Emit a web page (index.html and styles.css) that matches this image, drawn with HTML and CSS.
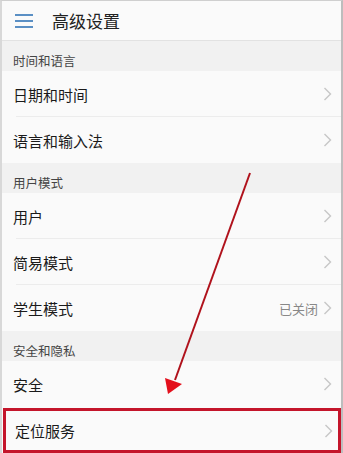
FILE: index.html
```html
<!DOCTYPE html>
<html lang="zh">
<head>
<meta charset="utf-8">
<link rel="stylesheet" href="styles.css">
</head>
<body>
<div class="screen">
  <header class="topbar">
    <svg class="menu" width="18" height="14" viewBox="0 0 18 14"><rect x="0" y="0" width="18" height="2" fill="#5a8fc4"/><rect x="0" y="6" width="18" height="2" fill="#5a8fc4"/><rect x="0" y="12" width="18" height="2" fill="#5a8fc4"/></svg>
    <span class="title">高级设置</span>
  </header>
  <div class="section">时间和语言</div>
  <div class="row"><span class="label">日期和时间</span><svg class="chev" width="9" height="14" viewBox="0 0 9 14"><polyline points="1.5,1 7.5,7 1.5,13" fill="none" stroke="#c6c6c6" stroke-width="1.4"/></svg></div>
  <div class="row last"><span class="label">语言和输入法</span><svg class="chev" width="9" height="14" viewBox="0 0 9 14"><polyline points="1.5,1 7.5,7 1.5,13" fill="none" stroke="#c6c6c6" stroke-width="1.4"/></svg></div>
  <div class="section">用户模式</div>
  <div class="row"><span class="label">用户</span><svg class="chev" width="9" height="14" viewBox="0 0 9 14"><polyline points="1.5,1 7.5,7 1.5,13" fill="none" stroke="#c6c6c6" stroke-width="1.4"/></svg></div>
  <div class="row"><span class="label">简易模式</span><svg class="chev" width="9" height="14" viewBox="0 0 9 14"><polyline points="1.5,1 7.5,7 1.5,13" fill="none" stroke="#c6c6c6" stroke-width="1.4"/></svg></div>
  <div class="row last"><span class="label">学生模式</span><span class="value">已关闭</span><svg class="chev" width="9" height="14" viewBox="0 0 9 14"><polyline points="1.5,1 7.5,7 1.5,13" fill="none" stroke="#c6c6c6" stroke-width="1.4"/></svg></div>
  <div class="section">安全和隐私</div>
  <div class="row last"><span class="label">安全</span><svg class="chev" width="9" height="14" viewBox="0 0 9 14"><polyline points="1.5,1 7.5,7 1.5,13" fill="none" stroke="#c6c6c6" stroke-width="1.4"/></svg></div>
  <div class="row last highlight"><span class="label">定位服务</span><svg class="chev" width="9" height="14" viewBox="0 0 9 14"><polyline points="1.5,1 7.5,7 1.5,13" fill="none" stroke="#c6c6c6" stroke-width="1.4"/></svg></div>
  <svg class="arrow" width="343" height="453" viewBox="0 0 343 453">
    <line x1="250" y1="173" x2="175" y2="380" stroke="#b0121c" stroke-width="2"/>
    <polygon points="168,394 165,378 182,384" fill="#e3101c"/>
  </svg>
</div>
</body>
</html>
```
FILE: styles.css
```css
html, body { margin: 0; padding: 0; }
body { font-family: "Noto Sans CJK SC", "Noto Sans", sans-serif; background: #fff; }
.screen {
  position: relative;
  width: 343px;
  height: 453px;
  box-sizing: border-box;
  border-left: 2px solid #d8d8d8;
  border-right: 2px solid #bdbdbd;
  border-top: 1px solid #cfcfcf;
  background: #fafafa;
  overflow: hidden;
}
.topbar {
  height: 39px;
  display: flex;
  align-items: center;
  padding-left: 13px;
  background: #fafafa;
  border-bottom: 1px solid #e2e2e2;
}
.menu { margin-right: 19px; }
.title { font-size: 17px; color: #222; }
.section {
  height: 30px;
  background: #f1f1f1;
  font-size: 12.5px;
  color: #444;
  display: flex;
  align-items: center;
  padding-left: 11px;
  padding-top: 9px;
  box-sizing: border-box;
}
.row {
  height: 46px;
  display: flex;
  align-items: center;
  padding-left: 11px;
  padding-right: 9px;
  font-size: 15px;
  color: #1a1a1a;
  position: relative;
  background: #fafafa;
}
.label { flex: 1; }
.row::after {
  content: "";
  position: absolute;
  left: 14px;
  right: 0;
  bottom: 0;
  height: 1px;
  background: #ececec;
}
.row.last::after { display: none; }
.value { font-size: 13px; color: #888; margin-right: 5px; }
.highlight {
  border: 3px solid #c4152b;
  margin: 1px 0 0 1px;
  height: 45px;
  box-sizing: border-box;
  padding-left: 9px;
  padding-right: 5px;
}
.arrow { position: absolute; left: -2px; top: -1px; pointer-events: none; }
```
